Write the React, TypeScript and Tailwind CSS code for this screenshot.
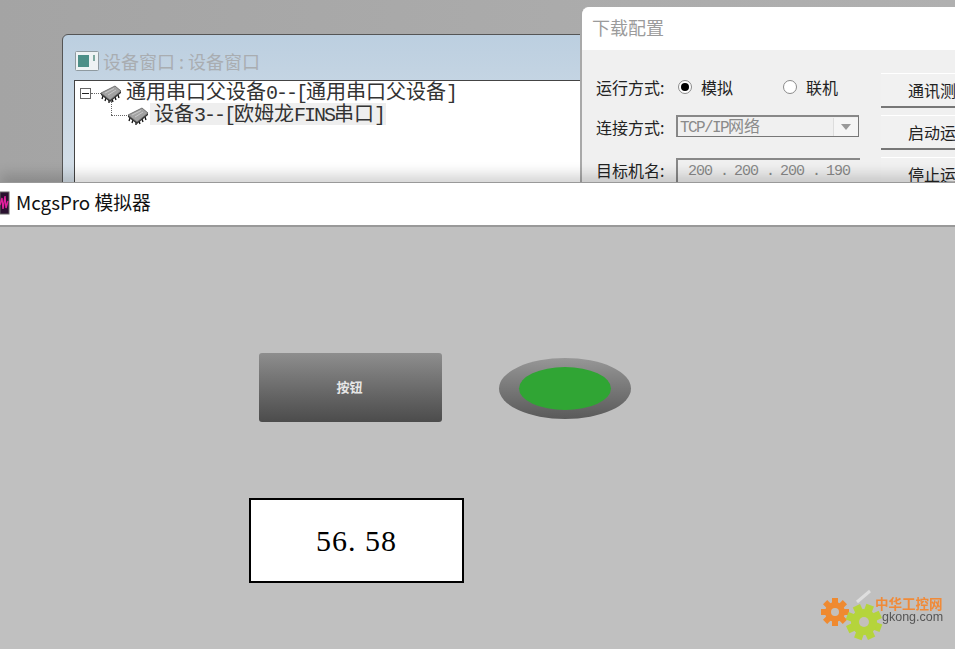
import React from 'react'

const MONO = "font-['Liberation_Mono','Noto_Sans_CJK_SC',monospace]";
const UI = "font-['Noto_Sans_CJK_SC',sans-serif]";

function Chip({ className }: { className: string }) {
  return (
    <svg className={className} width="22" height="18" viewBox="0 0 22 18">
      <path d="M3 11 L2 14 M6 13 L5 16 M9 15 L9 18 M12 14 L13 17 M15 12 L16 15 M18 10 L19 13" stroke="#111" strokeWidth="1.3" />
      <path d="M1 8 L10 15 L21 6 L21 8 L10 17 L1 10 Z" fill="#333" />
      <path d="M1 8 L15 1 L21 6 L10 15 Z" fill="#a2a2a2" stroke="#5c5c5c" strokeWidth="0.8" />
      <path d="M5 8 L14 3.5 M8 10 L16 5" stroke="#c9c9c9" strokeWidth="1" />
    </svg>
  )
}

// half-width runs are squeezed to 10px a character, as in the original
function Latin({ children }: { children: string }) {
  return <span className="tracking-[-2px]">{children}</span>
}

function DeviceWindow() {
  return (
    <div className="absolute left-[62px] top-[34px] w-[540px] h-[200px] rounded-tl-[6px] border border-[#555] bg-gradient-to-b from-[#bccfe0] to-[#dfe6ec] pt-[14px] pl-[11px]">
      <div className="flex items-center h-[24px] gap-[4px] ml-[1px]">
        <svg width="24" height="20" viewBox="0 0 24 20">
          <rect x="0.5" y="0.5" width="23" height="19" rx="1" fill="#eef2f4" stroke="#8f9aa0" />
          <rect x="3" y="4" width="11" height="12" fill="#4d8f88" />
          <rect x="18" y="4" width="2" height="6" fill="#7fa9a0" />
        </svg>
        <span className={`${UI} text-[18px] leading-[24px] text-[#a9adb1]`}>设备窗口 : 设备窗口</span>
      </div>
      <div className="relative mt-[7px] h-[130px] border border-[#444] border-r-0 bg-white">
        <div className="absolute left-[5px] top-[7px] w-[11px] h-[11px] border border-[#666] bg-white flex items-center justify-center">
          <div className="w-[7px] h-px bg-[#222]" />
        </div>
        <div className="absolute left-[16px] top-[12px] w-[10px] border-t border-dotted border-[#666]" />
        <div className="absolute left-[36px] top-[20px] h-[14px] border-l border-dotted border-[#666]" />
        <div className="absolute left-[36px] top-[34px] w-[18px] border-t border-dotted border-[#666]" />
        <Chip className="absolute left-[25px] top-[4px]" />
        <Chip className="absolute left-[52px] top-[26px]" />
        <div className={`${MONO} absolute left-[51px] top-0 h-[22px] text-[20px] leading-[26px] text-[#333] whitespace-nowrap`}>
          通用串口父设备<Latin>0--[</Latin>通用串口父设备<Latin>]</Latin>
        </div>
        <div className={`${MONO} absolute left-[75px] top-[22px] h-[22px] bg-[#eeeeee] pl-[4px] pr-[2px] text-[20px] leading-[26px] text-[#333] whitespace-nowrap`}>
          设备<Latin>3--[</Latin>欧姆龙<Latin>FINS</Latin>串口<Latin>]</Latin>
        </div>
      </div>
    </div>
  )
}

function Radio({ checked }: { checked?: boolean }) {
  return (
    <div className="w-[14px] h-[14px] rounded-full border border-[#8a8a8a] bg-white flex items-center justify-center">
      {checked && <div className="w-[8px] h-[8px] rounded-full bg-black" />}
    </div>
  )
}

function SideButton({ label }: { label: string }) {
  return (
    <div className={`${UI} w-[100px] h-[35px] bg-[#f1f1f1] border-t border-t-white border-b-2 border-b-[#777] pl-[27px] text-[16px] leading-[33px] text-[#222] whitespace-nowrap`}>
      {label}
    </div>
  )
}

function DownloadWindow() {
  return (
    <div className="absolute left-[580px] top-[7px] w-[420px] h-[240px] rounded-tl-[8px] border-l-2 border-l-[#a9a9a9] bg-[#f0f0f0]">
      <div className={`${UI} h-[43px] bg-white rounded-tl-[8px] pl-[10px] text-[18px] leading-[41px] text-[#9b9b9b]`}>下载配置</div>
      <div className="flex pl-[14px] pt-[22px]">
        <div className="w-[285px] flex flex-col">
          <div className={`${UI} flex items-center h-[30px] text-[16px] text-[#222]`}>
            <span className="w-[82px]">运行方式:</span>
            <Radio checked />
            <span className="ml-[9px] w-[82px]">模拟</span>
            <Radio />
            <span className="ml-[9px]">联机</span>
          </div>
          <div className={`${UI} flex items-center h-[30px] mt-[10px] text-[16px] text-[#222]`}>
            <span className="w-[80px]">连接方式:</span>
            <div className="w-[183px] h-[22px] mb-[2px] flex items-center justify-between border-t-2 border-l-2 border-[#888] border-r border-b border-r-[#777] border-b-[#777] pl-[2px]">
              <span className={`${MONO} pt-[3px] text-[16px] leading-[18px] text-[#8a8a8a]`}><span className="tracking-[-1.6px]">TCP/IP</span>网络</span>
              <div className="w-[25px] h-[18px] border-l border-[#ddd] bg-[#f5f5f5] flex items-center justify-center">
                <div className="w-0 h-0 border-l-[5px] border-r-[5px] border-t-[6px] border-l-transparent border-r-transparent border-t-[#999]" />
              </div>
            </div>
          </div>
          <div className={`${UI} flex items-center h-[30px] mt-[13px] text-[16px] text-[#222]`}>
            <span className="w-[80px]">目标机名:</span>
            <div className={`${MONO} flex w-[184px] h-[26px] mt-[2px] border-t-2 border-l-2 border-[#888] pl-[10px] text-[15px] tracking-[-1px] leading-[23px] text-[#8a8a8a] whitespace-pre`}>
              <span className="w-[46px]">200 .</span>
              <span className="w-[46px]">200 .</span>
              <span className="w-[46px]">200 .</span>
              <span>190</span>
            </div>
          </div>
        </div>
        <div className="flex flex-col gap-[7px] mt-[1px]">
          <SideButton label="通讯测试" />
          <SideButton label="启动运行" />
          <SideButton label="停止运行" />
        </div>
      </div>
    </div>
  )
}

function Watermark() {
  const teeth = [0, 45, 90, 135, 180, 225, 270, 315]
  return (
    <div className="absolute left-[820px] top-[361px] w-[130px] h-[55px] blur-[0.4px]">
      <svg className="absolute left-0 top-0" width="70" height="55" viewBox="0 0 70 55">
        <path d="M37 14 L50 3" stroke="#dedede" strokeWidth="3" />
        <g transform="translate(15 24)">
          {teeth.map((a) => (
            <rect key={a} x="-3" y="-14" width="6" height="8" fill="#ef8a30" transform={`rotate(${a})`} />
          ))}
          <circle r="10" fill="#ef8a30" />
          <circle r="4" fill="#c4c0ba" />
        </g>
        <g transform="translate(44 34)">
          {teeth.map((a) => (
            <rect key={a} x="-4" y="-18" width="8" height="10" fill="#b5d43c" transform={`rotate(${a + 20})`} />
          ))}
          <circle r="13" fill="#b5d43c" />
          <circle r="5" fill="#c4c0ba" />
        </g>
      </svg>
      <div className={`${UI} absolute left-[55px] top-[8px] text-[13.5px] leading-[14px] font-bold text-[#f08a38] whitespace-nowrap`}>中华工控网</div>
      <div className="absolute left-[62px] top-[23px] font-['Liberation_Sans',sans-serif] text-[12.5px] leading-[12px] text-[#555] whitespace-nowrap">gkong.com</div>
    </div>
  )
}

function SimulatorCanvas() {
  return (
    <div className="relative flex-1 bg-[#c0c0c0]">
      <div className={`${UI} absolute left-[259px] top-[126px] w-[183px] h-[69px] rounded-[3px] bg-gradient-to-b from-[#8e8e8e] to-[#4c4c4c] flex items-center justify-center text-[13px] font-bold text-[#e6e6e6]`}>
        <span className="-ml-[2px] -mt-[2px]">按钮</span>
      </div>
      <div className="absolute left-[499px] top-[131px] w-[132px] h-[61px] rounded-[50%] bg-gradient-to-b from-[#979797] to-[#5a5a5a] flex items-center justify-center">
        <div className="w-[92px] h-[43px] rounded-[50%] bg-[#30a534]" />
      </div>
      <div className="absolute left-[249px] top-[271px] w-[215px] h-[85px] border-2 border-black bg-white flex items-center justify-center font-['Liberation_Serif',serif] text-[30px] tracking-[1px] text-black">
        56. 58
      </div>
      <Watermark />
    </div>
  )
}

export default function App() {
  return (
    <div className="w-[955px] h-[649px] flex flex-col overflow-hidden bg-[#aaaaaa]">
      <div className="relative h-[182px] shrink-0 overflow-hidden bg-gradient-to-r from-[#a4a4a4] to-[#b0b0b0]">
        <DeviceWindow />
        <DownloadWindow />
      </div>
      <div className="relative h-[45px] shrink-0 flex items-center pb-[3px] bg-white border-t border-t-[#999] border-b-2 border-b-[#999] shadow-[0_-8px_12px_rgba(0,0,0,0.16)]">
        <svg width="10" height="24" viewBox="0 0 10 24" className="shrink-0">
          <rect x="0" y="1" width="9" height="22" fill="#2a1030" stroke="#666" />
          <path d="M0 14 L2 7 L3 18 L5 5 L6 17 L8 10" fill="none" stroke="#e0209c" strokeWidth="1.4" />
        </svg>
        <span className={`${UI} ml-[6px] text-[18.75px] text-[#111] whitespace-nowrap`}>McgsPro 模拟器</span>
      </div>
      <SimulatorCanvas />
    </div>
  )
}
